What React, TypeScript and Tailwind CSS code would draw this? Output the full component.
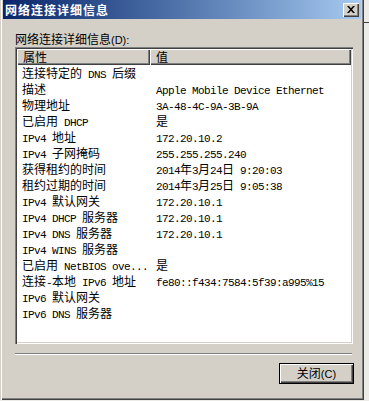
import React from "react";

const rows: [string, string][] = [
    ["连接特定的 DNS 后缀", ""],
    ["描述", "Apple Mobile Device Ethernet"],
    ["物理地址", "3A-48-4C-9A-3B-9A"],
    ["已启用 DHCP", "是"],
    ["IPv4 地址", "172.20.10.2"],
    ["IPv4 子网掩码", "255.255.255.240"],
    ["获得租约的时间", "2014年3月24日 9:20:03"],
    ["租约过期的时间", "2014年3月25日 9:05:38"],
    ["IPv4 默认网关", "172.20.10.1"],
    ["IPv4 DHCP 服务器", "172.20.10.1"],
    ["IPv4 DNS 服务器", "172.20.10.1"],
    ["IPv4 WINS 服务器", ""],
    ["已启用 NetBIOS ove...", "是"],
    ["连接-本地 IPv6 地址", "fe80::f434:7584:5f39:a995%15"],
    ["IPv6 默认网关", ""],
    ["IPv6 DNS 服务器", ""],
];

// SimSun-like mix: CJK at 12px full width, latin at 6px half width
function Mixed({ text }: { text: string }) {
    const parts = text.split(/([\u3000-\u9fff\uff00-\uffef]+)/);
    return (
        <>
            {parts.map((p, i) =>
                !p ? null : /[\u3000-\u9fff\uff00-\uffef]/.test(p) ? (
                    <span key={i} className="text-[12px] leading-[16px] font-['Noto_Sans_CJK_SC',sans-serif]">
                        {p}
                    </span>
                ) : (
                    <span key={i} className="text-[11px] tracking-[-0.6px] leading-[16px] font-['Liberation_Mono',monospace] whitespace-pre">
                        {p}
                    </span>
                )
            )}
        </>
    );
}

function HeaderCell({ label, className }: { label: string; className: string }) {
    return (
        <div
            className={`h-[16px] bg-[#d4d0c8] shadow-[inset_1px_1px_0_#fff,inset_-1px_-1px_0_#404040,inset_-2px_-2px_0_#808080] pl-[6px] text-black text-[12px] leading-[16px] ${className}`}
        >
            <Mixed text={label} />
        </div>
    );
}

export default function App() {
    return (
        <div className="w-[369px] h-[401px] bg-[#ecebe8] flex overflow-hidden font-['Noto_Sans_CJK_SC',sans-serif] text-[12px] leading-[16px]">
            <div className="w-[364px] h-[400px] bg-[#d4d0c8] flex flex-col pl-[3px] pr-[3px] pb-[3px] shadow-[inset_1px_0_0_#d4d0c8,inset_2px_0_0_#fff,inset_-1px_-1px_0_#404040,inset_-2px_-2px_0_#808080]">
                {/* title bar */}
                <div className="h-[19px] bg-gradient-to-r from-[#0a246a] to-[#a6caf0] flex items-center justify-between pl-[2px] pr-[2px]">
                    <span className="text-white text-[12px] font-bold tracking-[1px] leading-[19px]">网络连接详细信息</span>
                    <div className="w-[16px] h-[14px] bg-[#d4d0c8] shadow-[inset_1px_1px_0_#fff,inset_-1px_-1px_0_#404040,inset_-2px_-2px_0_#808080] flex items-center justify-center">
                        <svg width="8" height="7" viewBox="0 0 8 7">
                            <path d="M0 0h2l2 2.2L6 0h2L5 3.5 8 7H6L4 4.8 2 7H0l3-3.5z" fill="#000" />
                        </svg>
                    </div>
                </div>

                <div className="flex flex-col pl-[12px] pr-[7px]">
                    <div className="h-[16px] mt-[12px] text-black whitespace-nowrap">
                        <Mixed text="网络连接详细信息" />
                        <span className="text-[11px] leading-[16px] font-['Liberation_Sans',sans-serif]">(D):</span>
                    </div>

                    {/* list view */}
                    <div className="w-[338px] h-[297px] bg-white shadow-[inset_1px_1px_0_#808080,inset_2px_2px_0_#404040,inset_-1px_-1px_0_#fff,inset_-2px_-2px_0_#d4d0c8] p-[2px] flex flex-col">
                        <div className="flex">
                            <HeaderCell label="属性" className="w-[133px]" />
                            <HeaderCell label="值" className="w-[201px]" />
                        </div>
                        <div className="flex flex-col">
                            {rows.map(([k, v]) => (
                                <div key={k} className="flex h-[16px] text-black whitespace-nowrap">
                                    <div className="w-[135px] pl-[5px]">
                                        <Mixed text={k} />
                                    </div>
                                    <div className="flex-1 pl-[4px]">
                                        <Mixed text={v} />
                                    </div>
                                </div>
                            ))}
                        </div>
                    </div>

                    {/* separator */}
                    <div className="w-[337px] h-[2px] mt-[9px] border-t border-t-[#808080] border-b border-b-white" />

                    <div className="flex justify-end mt-[8px]">
                        <button className="w-[75px] h-[21px] bg-[#d4d0c8] border border-black shadow-[inset_1px_1px_0_#fff,inset_-1px_-1px_0_#404040,inset_-2px_-2px_0_#808080] flex items-center justify-center text-black">
                            <span className="leading-[16px]">
                                <Mixed text="关闭" />
                                <span className="text-[11px] leading-[16px] font-['Liberation_Sans',sans-serif]">(C)</span>
                            </span>
                        </button>
                    </div>
                </div>
            </div>
            <div className="flex-1 flex flex-col">
                <div className="h-[22px]" />
                <div className="h-[1px] bg-[#404040]" />
            </div>
        </div>
    );
}
